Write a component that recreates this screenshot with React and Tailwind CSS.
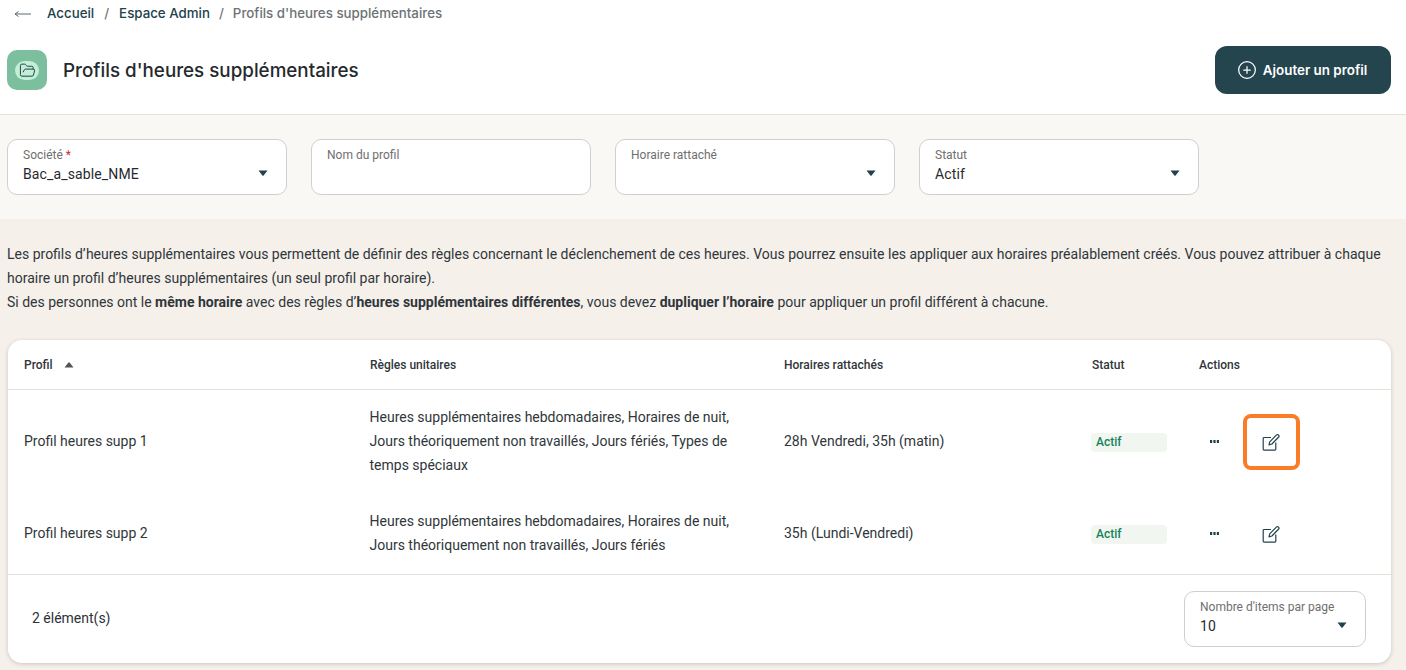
import { CirclePlus, FolderOpen } from 'lucide-react'

const rows = [
  {
    name: 'Profil heures supp 1',
    rules: 'Heures supplémentaires hebdomadaires, Horaires de nuit, Jours théoriquement non travaillés, Jours fériés, Types de temps spéciaux',
    schedules: '28h Vendredi, 35h (matin)',
    height: 'h-[102px]',
    focus: true,
  },
  {
    name: 'Profil heures supp 2',
    rules: 'Heures supplémentaires hebdomadaires, Horaires de nuit, Jours théoriquement non travaillés, Jours fériés',
    schedules: '35h (Lundi-Vendredi)',
    height: 'h-[82px]',
    focus: false,
  },
]

function Caret({ up }) {
  return (
    <svg width="10" height="6" viewBox="0 0 10 6" className={up ? 'rotate-180' : ''}>
      <path d="M0.5 0.5h9L5.8 5.2a1 1 0 0 1-1.6 0z" fill="currentColor" />
    </svg>
  )
}

function BackArrow() {
  return (
    <svg width="18" height="10" viewBox="0 0 18 10" fill="none" stroke="#5a6a70" strokeWidth="1">
      <path d="M1 5h16M1 5l3.5-2.5M1 5l3.5 2.5" />
    </svg>
  )
}

function EditIcon() {
  return (
    <svg width="18" height="18" viewBox="0 0 18 18" fill="none" stroke="#21424d" strokeWidth="1.2" strokeLinejoin="round">
      <path d="M9 4.5H2a.8.8 0 0 0-.8.8v11a.8.8 0 0 0 .8.8h11a.8.8 0 0 0 .8-.8V9.5" />
      <path d="M7 11.8l.7-3L14.6 1.9a1.2 1.2 0 0 1 1.7 0l.4.4a1.2 1.2 0 0 1 0 1.7L9.9 11z" />
    </svg>
  )
}

function Dots() {
  return (
    <svg width="9" height="3" viewBox="0 0 9 3" fill="#21424d">
      <rect x="0" y="0" width="2.2" height="3" />
      <rect x="3.4" y="0" width="2.2" height="3" />
      <rect x="6.8" y="0" width="2.2" height="3" />
    </svg>
  )
}

function Field({ label, value, required, select, width = 'w-[280px]' }) {
  return (
    <div className={`relative h-14 ${width} rounded-[10px] border border-[#cfcfcf] bg-white pl-[15px] pr-[18px] pt-[7px]`}>
      <div className="text-xs leading-[16px] text-[#6f6f6f]">
        {label}
        {required && <span className="text-[#c0392b]"> *</span>}
      </div>
      <div className="text-sm leading-[20px] tracking-[0.13px] text-[#1f2a30] mt-[1px]">{value}</div>
      {select && (
        <div className="absolute right-[18px] top-[30px] text-[#21424d]">
          <Caret />
        </div>
      )}
    </div>
  )
}

export default function App() {
  return (
    <div className="h-[670px] overflow-hidden bg-[#f5f0ea] font-['Roboto',sans-serif] text-[#2d3338]">
      <div className="h-[115px] bg-white border-b border-[#e6e2da]">
        <div className="flex items-center h-[27px] pl-[14px] font-['Inter',sans-serif] text-[13.3px] font-medium">
          <BackArrow />
          <span className="ml-[15px] text-[#21424d]">Accueil</span>
          <span className="mx-[10px] text-[#777]">/</span>
          <span className="text-[#21424d]">Espace Admin</span>
          <span className="mx-[9px] text-[#777]">/</span>
          <span className="text-[#6d7276]">Profils d'heures supplémentaires</span>
        </div>
        <div className="flex items-center justify-between pl-[7px] pr-[15px] mt-[19px]">
          <div className="flex items-center gap-[16px]">
            <div className="w-10 h-10 rounded-[10px] bg-[#7bbf9e] flex items-center justify-center">
              <div className="w-6 h-[19px] rounded-full bg-[#c4efd7] flex items-center justify-center">
                <FolderOpen size={17} strokeWidth={1.4} className="text-[#21424d]" />
              </div>
            </div>
            <h1 className="pt-[2px] font-['Inter',sans-serif] text-[18.8px] font-medium text-[#25292e]">Profils d'heures supplémentaires</h1>
          </div>
          <button className="h-12 w-[176px] pr-[2px] rounded-[12px] bg-[#24444e] text-white font-['Inter',sans-serif] text-[13.4px] font-semibold flex items-center justify-center gap-[6px]">
            <CirclePlus size={20} strokeWidth={1.5} />
            Ajouter un profil
          </button>
        </div>
      </div>

      <div className="h-[104px] bg-[#faf8f5] flex gap-6 pl-[7px] pt-[24px]">
        <Field label="Société" required value="Bac_a_sable_NME" select />
        <Field label="Nom du profil" />
        <Field label="Horaire rattaché" select />
        <Field label="Statut" value="Actif" select />
      </div>

      <div className="px-[7px] pt-[23px] text-sm leading-6 text-[#30363a]">
        <p>
          Les profils d’heures supplémentaires vous permettent de définir des règles concernant le déclenchement de ces heures. Vous pourrez ensuite les appliquer aux horaires préalablement créés. Vous pouvez attribuer à chaque horaire un profil d’heures supplémentaires (un seul profil par horaire).
        </p>
        <p>
          Si des personnes ont le <b className="font-bold">même horaire</b> avec des règles d’<b className="font-bold">heures supplémentaires différentes</b>, vous devez <b className="font-bold">dupliquer l’horaire</b> pour appliquer un profil différent à chacune.
        </p>
      </div>

      <div className="mx-[8px] mt-[26px] w-[1383px] h-[323px] rounded-[14px] bg-white shadow-[0_1px_4px_rgba(0,0,0,0.18)] overflow-hidden">
        <div className="flex items-center h-[50px] border-b border-[#e3e1dc] text-xs font-medium text-[#30363a]">
          <div className="w-[362px] pl-4 flex items-center gap-[11px]">
            Profil
            <span className="text-[#555]"><Caret up /></span>
          </div>
          <div className="w-[414px]">Règles unitaires</div>
          <div className="w-[308px]">Horaires rattachés</div>
          <div className="w-[107px]">Statut</div>
          <div>Actions</div>
        </div>
        {rows.map((row) => (
          <div key={row.name} className={`flex items-center ${row.height} text-sm text-[#30363a]`}>
            <div className="w-[361.5px] pl-4">{row.name}</div>
            <div className="w-[414.5px] pr-[50px] leading-6">{row.rules}</div>
            <div className="w-[308px]">{row.schedules}</div>
            <div className="w-[107px]">
              <div className="-ml-[1px] mt-[2px] w-[76px] h-[19px] rounded-[4px] bg-[#f1f7f0] pl-[5px] text-xs font-medium leading-[19px] text-[#16825d]">Actif</div>
            </div>
            <div className="flex items-center pl-[11px]">
              <span className="flex w-[9px]"><Dots /></span>
              <div className="relative ml-[43px] mt-[1px] flex">
                <EditIcon />
                {row.focus && (
                  <div className="absolute -left-[19px] -top-[19px] w-[57px] h-[56px] rounded-[8px] border-4 border-[#fb7c27]" />
                )}
              </div>
            </div>
          </div>
        ))}
        <div className="flex items-center justify-between h-[88px] border-t border-[#e3e1dc] pl-[24px] pr-[25px] text-sm">
          <span className="pb-[2px]">2 élément(s)</span>
          <Field label="Nombre d'items par page" value="10" select width="w-[182px]" />
        </div>
      </div>
    </div>
  )
}
